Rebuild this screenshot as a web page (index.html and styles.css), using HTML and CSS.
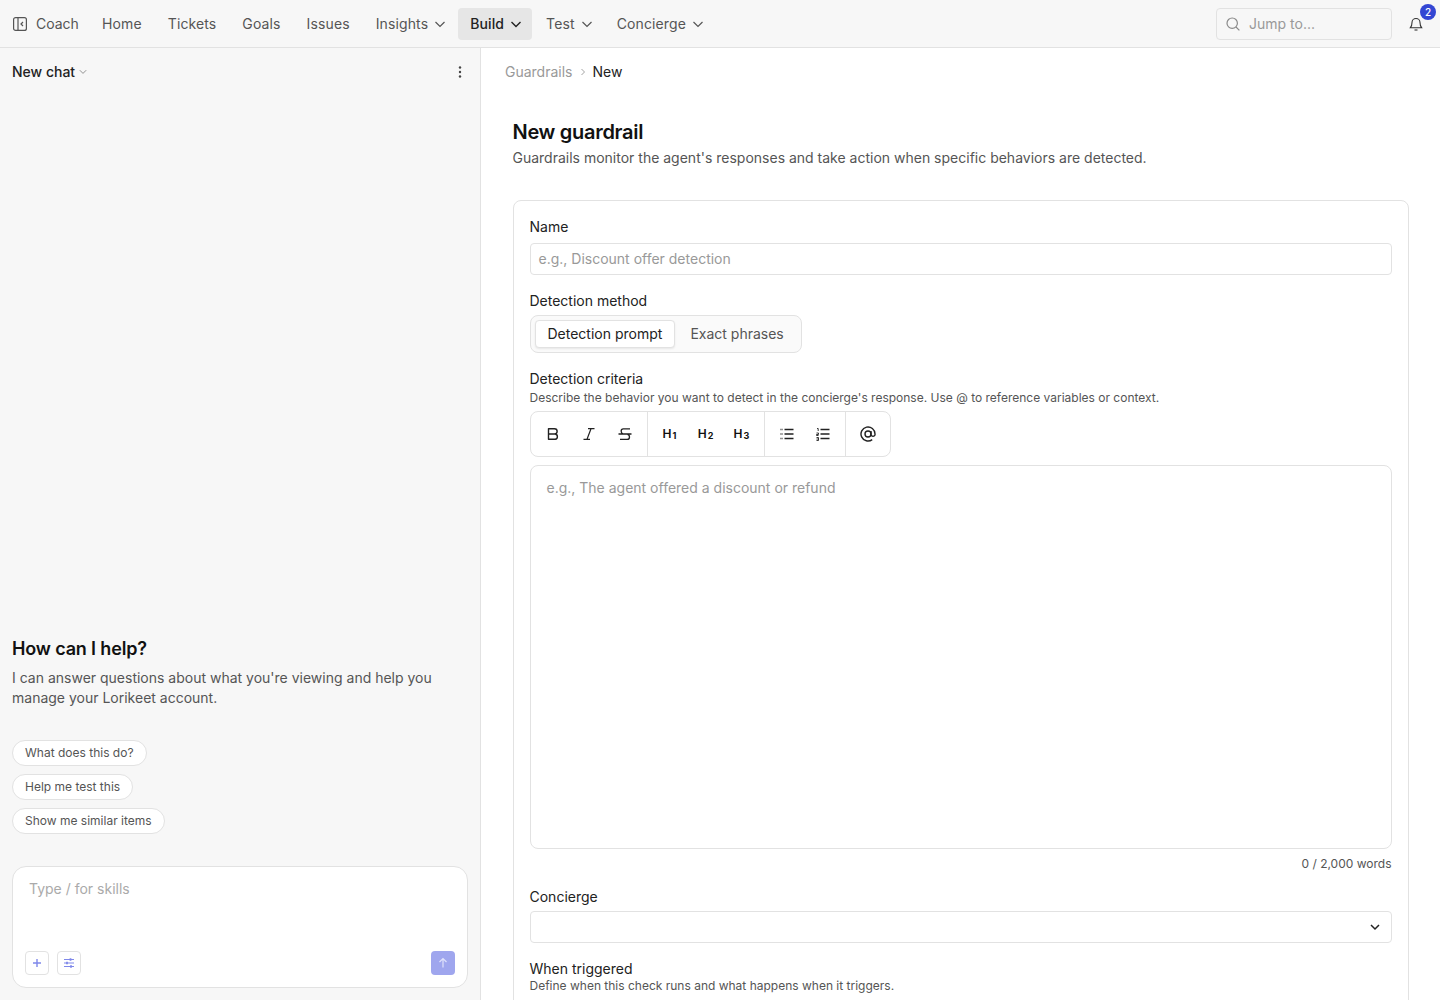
FILE: index.html
```html
<!DOCTYPE html>
<html lang="en">
<head>
<meta charset="utf-8">
<title>New guardrail</title>
<link rel="stylesheet" href="styles.css">
</head>
<body>
<header class="topbar">
  <div class="brand">
    <svg class="i16" viewBox="0 0 16 16" fill="none" stroke="#555" stroke-width="1.200"><rect x="1.600" y="1.600" width="12.800" height="12.800" rx="2"/><path d="M6 1.600v12.800"/><path d="M11 6 9 8l2 2"/></svg>
    <span>Coach</span>
  </div>
  <nav class="nav">
    <a class="nav-item">Home</a>
    <a class="nav-item">Tickets</a>
    <a class="nav-item">Goals</a>
    <a class="nav-item">Issues</a>
    <a class="nav-item has-menu">Insights <svg class="i16" viewBox="0 0 16 16" fill="none" stroke="#555" stroke-width="1.200"><path d="M3.500 6 8 10.500 12.500 6"/></svg></a>
    <a class="nav-item has-menu active">Build <svg class="i16" viewBox="0 0 16 16" fill="none" stroke="#222" stroke-width="1.400"><path d="M3.500 6 8 10.500 12.500 6"/></svg></a>
    <a class="nav-item has-menu">Test <svg class="i16" viewBox="0 0 16 16" fill="none" stroke="#555" stroke-width="1.200"><path d="M3.500 6 8 10.500 12.500 6"/></svg></a>
    <a class="nav-item has-menu">Concierge <svg class="i16" viewBox="0 0 16 16" fill="none" stroke="#555" stroke-width="1.200"><path d="M3.500 6 8 10.500 12.500 6"/></svg></a>
  </nav>
  <div class="top-right">
    <div class="jump">
      <svg class="i16" viewBox="0 0 16 16" fill="none" stroke="#8a8a8a" stroke-width="1.200"><circle cx="7.200" cy="7.200" r="5.200"/><path d="m11 11 3.400 3.400"/></svg>
      <span>Jump to...</span>
    </div>
    <div class="bell">
      <svg class="i16" viewBox="0 0 16 16" fill="none" stroke="#333" stroke-width="1.100"><path d="M4 6.500a4 4 0 0 1 8 0c0 3 .8 4.200 1.600 5.200H2.400C3.200 10.700 4 9.500 4 6.500Z"/><path d="M6.500 14h3"/></svg>
      <span class="badge">2</span>
    </div>
  </div>
</header>
<div class="shell">
  <aside class="side">
    <div class="side-head">
      <div class="side-title">New chat <svg class="chev-s" viewBox="0 0 8 8" fill="none" stroke="#777" stroke-width=".8"><path d="M.8 2.200 4 5.400l3.200-3.200"/></svg></div>
      <svg class="i16" viewBox="0 0 16 16" fill="#444"><circle cx="8" cy="3.500" r="1.200"/><circle cx="8" cy="8" r="1.200"/><circle cx="8" cy="12.500" r="1.200"/></svg>
    </div>
    <div class="welcome">
      <h2>How can I help?</h2>
      <p>I can answer questions about what you're viewing and help you manage your Lorikeet account.</p>
      <div class="chips">
        <button class="chip">What does this do?</button>
        <button class="chip">Help me test this</button>
        <button class="chip">Show me similar items</button>
      </div>
    </div>
    <div class="composer">
      <div class="composer-ph">Type / for skills</div>
      <div class="composer-tools">
        <div class="tool-group">
          <span class="tool"><svg class="i12" viewBox="0 0 12 12" fill="none" stroke="#7f88ea" stroke-width="1.400"><path d="M6 2v8M2 6h8"/></svg></span>
          <span class="tool"><svg class="i12" viewBox="0 0 12 12" fill="none" stroke="#7f88ea" stroke-width="1.100"><path d="M1 2.500h10M1 6h10M1 9.500h10"/><path d="M7.500 1.200v2.600M4 4.700v2.600M8 8.200v2.600" stroke-width="1.800"/></svg></span>
        </div>
        <span class="send"><svg class="i12" viewBox="0 0 12 12" fill="none" stroke="#dfe2fb" stroke-width="1.200"><path d="M6 10.500v-9M2.500 5 6 1.500 9.500 5"/></svg></span>
      </div>
    </div>
  </aside>
  <main class="main">
    <div class="crumbs">
      <span class="crumb-muted">Guardrails</span>
      <svg class="crumb-sep" viewBox="0 0 8 8" fill="none" stroke="#999" stroke-width=".9"><path d="m2.500 1 3 3-3 3"/></svg>
      <span>New</span>
    </div>
    <div class="page">
      <h1>New guardrail</h1>
      <p class="lead">Guardrails monitor the agent's responses and take action when specific behaviors are detected.</p>
      <section class="card">
        <label class="label">Name</label>
        <div class="input">e.g., Discount offer detection</div>

        <label class="label label-method">Detection method</label>
        <div class="segments">
          <span class="seg seg-on">Detection prompt</span>
          <span class="seg">Exact phrases</span>
        </div>

        <label class="label label-criteria">Detection criteria</label>
        <div class="help">Describe the behavior you want to detect in the concierge's response. Use @ to reference variables or context.</div>
        <div class="toolbar">
          <div class="tb-group">
            <span class="tb-btn"><svg class="i16" viewBox="0 0 16 16" fill="none" stroke="#222" stroke-width="1.400"><path d="M3.500 2.700h6a2.600 2.600 0 0 1 0 5.300h-6Zm0 5.300h6.700a2.700 2.700 0 0 1 0 5.300H3.500Z" stroke-linejoin="round"/></svg></span>
            <span class="tb-btn"><svg class="i16" viewBox="0 0 16 16" fill="none" stroke="#222" stroke-width="1.200"><path d="M7 2.700h6.500M2.500 13.300H9M10 2.700 6 13.300"/></svg></span>
            <span class="tb-btn"><svg class="i16" viewBox="0 0 16 16" fill="none" stroke="#222" stroke-width="1.300"><path d="M13 2.800H6.200C3.500 2.800 3.500 7 6 7.800M1.500 8h13M10.500 8.400c2.700.6 2.700 5-.3 5H3"/></svg></span>
          </div>
          <div class="tb-group">
            <span class="tb-btn tb-h">H<small>1</small></span>
            <span class="tb-btn tb-h">H<small>2</small></span>
            <span class="tb-btn tb-h">H<small>3</small></span>
          </div>
          <div class="tb-group">
            <span class="tb-btn"><svg class="i16" viewBox="0 0 16 16" fill="none" stroke="#222" stroke-width="1.400"><path d="M5.500 3.500h9M5.500 8h9M5.500 12.500h9"/><path d="M1.500 3.500h2M1.500 8h2M1.500 12.500h2" stroke-dasharray="1 .5"/></svg></span>
            <span class="tb-btn"><svg class="i16" viewBox="0 0 16 16" fill="none" stroke="#222" stroke-width="1.400"><path d="M5.500 3.500h9M5.500 8h9M5.500 12.500h9"/><path d="M2 2.500h1.200v2.500M1.500 7h2v1.500h-2v1h2M1.500 11.500h2v3h-2M1.500 13h2" stroke-width=".9"/></svg></span>
          </div>
          <div class="tb-group">
            <span class="tb-btn"><svg class="i16" viewBox="0 0 16 16" fill="none" stroke="#222" stroke-width="1.400"><circle cx="8" cy="8" r="3"/><path d="M11 5v4a2.200 2.200 0 0 0 4 0V8a7 7 0 1 0-2.800 5.600"/></svg></span>
          </div>
        </div>
        <div class="editor">e.g., The agent offered a discount or refund</div>
        <div class="count">0 / 2,000 words</div>

        <label class="label label-concierge">Concierge</label>
        <div class="select"><svg class="i12" viewBox="0 0 12 12" fill="none" stroke="#222" stroke-width="1.500"><path d="M2 4 6 8l4-4"/></svg></div>

        <label class="label label-trigger">When triggered</label>
        <div class="help help-tight">Define when this check runs and what happens when it triggers.</div>
      </section>
    </div>
  </main>
</div>
</body>
</html>
```
FILE: styles.css
```css
* { box-sizing: border-box; }
html, body { margin: 0; height: 1000px; overflow: hidden; }
body { font-family: Inter, "Liberation Sans", sans-serif; font-size: 14px; line-height: 20px; color: #111; background: #fff; }
svg { display: block; flex: none; }
.i16 { width: 16px; height: 16px; }
.i12 { width: 12px; height: 12px; }

.topbar { height: 48px; display: flex; align-items: center; background: #f7f7f7; border-bottom: 1px solid #e2e2e2; padding: 0 16px 0 12px; }
.brand { display: flex; align-items: center; gap: 8px; color: #555; width: 78px; flex: none; }
.nav { display: flex; align-items: center; gap: 2px; }
.nav-item { display: flex; align-items: center; height: 32px; padding: 0 12px; gap: 4px; color: #555; border-radius: 4px; letter-spacing: .12px; }
.nav-item.has-menu { padding-right: 8px; }
.nav-item.active { background: #e6e6e6; color: #222; font-weight: 500; }
.top-right { margin-left: auto; display: flex; align-items: center; gap: 16px; }
.jump { width: 176px; height: 32px; border: 1px solid #e2e2e2; border-radius: 4px; display: flex; align-items: center; gap: 8px; padding: 0 8px; color: #999; }
.bell { position: relative; width: 16px; height: 16px; }
.badge { position: absolute; top: -12px; right: -12px; width: 16px; height: 16px; border-radius: 50%; background: #3346d3; color: #fff; font-size: 10px; line-height: 16px; text-align: center; font-weight: 500; }

.shell { display: flex; height: 952px; }
.side { width: 481px; flex: none; background: #f7f7f7; border-right: 1px solid #e2e2e2; padding: 0 12px 12px; display: flex; flex-direction: column; }
.side-head { display: flex; justify-content: space-between; align-items: center; height: 48px; }
.side-title { display: flex; align-items: center; gap: 4px; font-weight: 500; color: #222; }
.chev-s { width: 8px; height: 8px; }
.welcome { margin-top: auto; }
h2 { font-size: 18px; line-height: 24px; font-weight: 600; margin: 0 0 7px; color: #111; letter-spacing: -.15px; }
.welcome p { margin: 0 0 32px; color: #555; width: 440px; }
.chips { display: flex; flex-direction: column; align-items: flex-start; gap: 8px; margin-bottom: 32px; }
.chip { font: inherit; font-size: 12px; line-height: 16px; height: 26px; padding: 0 12px; border: 1px solid #e2e2e2; border-radius: 13px; background: #fff; color: #555; }
.composer { height: 122px; background: #fff; border: 1px solid #e2e2e2; border-radius: 14px; padding: 12px; display: flex; flex-direction: column; justify-content: space-between; }
.composer-ph { color: #aaa; padding-left: 4px; }
.composer-tools { display: flex; justify-content: space-between; }
.tool-group { display: flex; gap: 8px; }
.tool { width: 24px; height: 24px; border: 1px solid #e2e2e2; border-radius: 4px; display: flex; align-items: center; justify-content: center; }
.send { width: 24px; height: 24px; background: #9fa6ee; border-radius: 4px; display: flex; align-items: center; justify-content: center; }

.main { flex: 1; min-width: 0; }
.crumbs { height: 48px; display: flex; align-items: center; gap: 6px; padding-left: 24px; color: #222; }
.crumb-muted { color: #999; }
.crumb-sep { width: 8px; height: 8px; }
.page { padding: 24px 31.5px 0; }
h1 { font-size: 20px; line-height: 24px; font-weight: 600; margin: 0 0 4px; color: #111; letter-spacing: -.3px; }
.lead { margin: 0 0 32px; color: #555; }
.card { border: 1px solid #e2e2e2; border-radius: 8px; padding: 16px; }
.label { display: block; color: #222; line-height: 20px; }
.input { height: 32px; margin-top: 6px; border: 1px solid #e2e2e2; border-radius: 4px; padding: 5px 8px; color: #999; }
.label-method { margin-top: 16px; }
.segments { display: inline-flex; margin-top: 4px; height: 38px; padding: 4px; border: 1px solid #e2e2e2; border-radius: 8px; background: #fafafa; vertical-align: top; }
.seg { display: flex; align-items: center; padding: 0 12px; color: #555; border-radius: 4px; }
.seg + .seg { padding: 0 13px 0 15px; }
.seg-on { background: #fff; color: #222; border: 1px solid #e2e2e2; box-shadow: 0 1px 2px rgba(0,0,0,.08); }
.label-criteria { margin-top: 16px; }
.help { font-size: 12px; line-height: 16px; color: #555; margin-top: 1px; }
.help-tight { margin-top: -1px; }
.toolbar { display: inline-flex; vertical-align: top; margin-top: 5px; height: 46px; border: 1px solid #e2e2e2; border-radius: 8px; }
.tb-group { display: flex; align-items: center; padding: 0 4px; border-left: 1px solid #e2e2e2; }
.tb-group:first-child { border-left: 0; }
.tb-btn { width: 36px; height: 36px; display: flex; align-items: center; justify-content: center; }
.tb-h { font-size: 12px; font-weight: 600; color: #111; }
.tb-h small { font-size: 9px; font-weight: 700; margin-left: 1px; line-height: 1; margin-top: 3px; }
.editor { height: 384px; margin-top: 8px; border: 1px solid #e2e2e2; border-radius: 8px; padding: 12px 16px; color: #999; }
.count { font-size: 12px; line-height: 16px; color: #555; text-align: right; margin-top: 7px; }
.label-concierge { margin-top: 15px; }
.select { height: 32px; margin-top: 4px; border: 1px solid #e2e2e2; border-radius: 4px; display: flex; align-items: center; justify-content: flex-end; padding-right: 10px; }
.label-trigger { margin-top: 16px; }
```
